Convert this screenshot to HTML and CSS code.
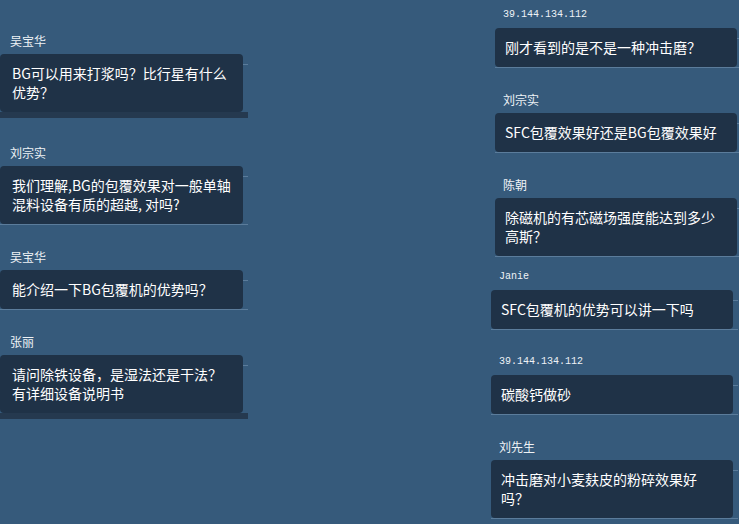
FILE: index.html
```html
<!DOCTYPE html>
<html lang="zh-CN">
<head>
<meta charset="utf-8">
<title>留言</title>
<link rel="stylesheet" href="styles.css">
</head>
<body>
<div class="board">
  <div class="col col-left">
    <div class="item item--strip">
      <div class="name">吴宝华</div>
      <div class="bubble">BG可以用来打浆吗？比行星有什么优势？</div>
    </div>
    <div class="item">
      <div class="name">刘宗实</div>
      <div class="bubble">我们理解,BG的包覆效果对一般单轴混料设备有质的超越, 对吗?</div>
    </div>
    <div class="item">
      <div class="name">吴宝华</div>
      <div class="bubble">能介绍一下BG包覆机的优势吗？</div>
    </div>
    <div class="item item--strip">
      <div class="name">张丽</div>
      <div class="bubble">请问除铁设备，是湿法还是干法？有详细设备说明书</div>
    </div>
  </div>
  <div class="col col-right">
    <div class="item item--shift">
      <div class="name mono">39.144.134.112</div>
      <div class="bubble">刚才看到的是不是一种冲击磨？</div>
    </div>
    <div class="item item--shift">
      <div class="name">刘宗实</div>
      <div class="bubble">SFC包覆效果好还是BG包覆效果好</div>
    </div>
    <div class="item item--shift item--tight">
      <div class="name">陈朝</div>
      <div class="bubble">除磁机的有芯磁场强度能达到多少高斯？</div>
    </div>
    <div class="item">
      <div class="name mono">Janie</div>
      <div class="bubble">SFC包覆机的优势可以讲一下吗</div>
    </div>
    <div class="item">
      <div class="name mono">39.144.134.112</div>
      <div class="bubble">碳酸钙做砂</div>
    </div>
    <div class="item">
      <div class="name">刘先生</div>
      <div class="bubble">冲击磨对小麦麸皮的粉碎效果好吗？</div>
    </div>
  </div>
</div>
</body>
</html>
```
FILE: styles.css
```css
html, body {
  margin: 0;
  padding: 0;
  overflow: hidden;
}
body {
  background: #365a7b;
  font-family: "Noto Sans CJK SC", "Noto Sans", sans-serif;
  color: #ffffff;
  width: 739px;
  height: 524px;
}
.board {
  display: flex;
  justify-content: space-between;
  width: 739px;
}
.col {
  display: flex;
  flex-direction: column;
}
.col-left {
  width: 243px;
  padding-top: 31px;
}
.col-right {
  width: 248px;
  padding-top: 5px;
}
.item {
  margin-bottom: 23px;
}
.item--strip {
  margin-bottom: 31px;
}
.item--tight {
  margin-bottom: 11px;
}
.item--shift {
  margin-left: 4px;
}
.name {
  height: 20px;
  line-height: 20px;
  font-size: 12px;
  color: #eef2f6;
  margin-bottom: 3px;
  padding-left: 8px;
}
.col-left .name {
  padding-left: 10px;
}
.name.mono {
  font-family: "Liberation Mono", "DejaVu Sans Mono", monospace;
  font-size: 10px;
}
.bubble {
  position: relative;
  width: 242px;
  box-sizing: border-box;
  padding: 10px 12px 10px 10px;
  font-size: 14px;
  line-height: 19px;
  background: #1f3247;
  border-radius: 4px;
}
.col-left .bubble {
  width: 243px;
  padding: 10px 11px 10px 12px;
}
.bubble::before {
  content: "";
  position: absolute;
  left: 0;
  right: -5px;
  top: 10px;
  bottom: -1px;
  border-top: 1px solid #5b7c9b;
  border-bottom: 1px solid #5b7c9b;
  z-index: -1;
}
.item--strip .bubble::after {
  content: "";
  position: absolute;
  left: 0;
  right: -5px;
  bottom: -6px;
  height: 6px;
  background: #25394f;
  z-index: -1;
}
```
